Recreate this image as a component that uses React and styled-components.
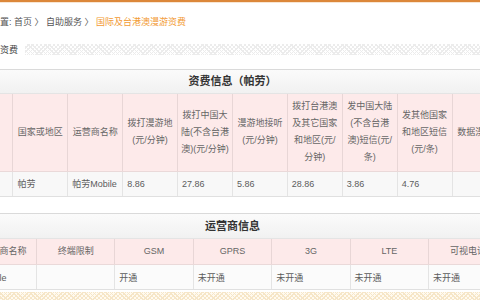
import React from 'react';
import styled, { createGlobalStyle } from 'styled-components';

const GlobalStyle = createGlobalStyle`
  html, body {
    margin: 0;
    padding: 0;
    background: #fff;
    overflow: hidden;
  }
  body {
    font-family: "Liberation Sans", "Noto Sans CJK SC", sans-serif;
  }
`;

const Page = styled.div`
  width: 549px;
  height: 300px;
  margin-left: -42px;
`;

const TopLine = styled.div`
  height: 2px;
  background: #dc873a;
  border-bottom: 1px solid #f8e6d3;
`;

const Crumbs = styled.div`
  padding: 10px 0 0 15px;
  font-size: 9px;
  line-height: 18px;
  color: #555;
  white-space: nowrap;
`;

const Current = styled.span`
  color: #f29b36;
`;

const SectionHead = styled.div`
  display: flex;
  align-items: center;
  gap: 7px;
  margin-top: 9px;
  padding-left: 6px;
  height: 18px;
  font-size: 9px;
  color: #444;
  white-space: nowrap;
`;

const Hatch = styled.div`
  flex: 1;
  height: ${p => p.$h || 11}px;
  background-color: ${p => p.$bg || '#fff'};
  background-image:
    repeating-linear-gradient(45deg, ${p => p.$ink || '#ececec'} 0 1px, transparent 1px 3px),
    repeating-linear-gradient(-45deg, ${p => p.$ink || '#ececec'} 0 1px, transparent 1px 3px);
`;

const Block = styled.section`
  margin-top: ${p => p.$gap}px;
`;

const TitleBar = styled.div`
  box-sizing: border-box;
  height: ${p => p.$h}px;
  line-height: ${p => p.$h - 2}px;
  text-align: center;
  font-size: 11px;
  font-weight: bold;
  color: #333;
  border-top: 1px solid #dadada;
  border-bottom: 1px solid #e4e4e4;
  background: linear-gradient(#fbfbfb, #f1f1f1);
`;

const Grid = styled.table`
  width: 549px;
  table-layout: fixed;
  border-collapse: collapse;
  font-size: 9px;
  color: #666;
`;

const Row = styled.tr`
  height: ${p => p.$h}px;
`;

const HeadCell = styled.th`
  box-sizing: border-box;
  padding: 0 2px 0 ${p => p.$indent || 2}px;
  background: #fdeaea;
  font-weight: normal;
  text-align: center;
  line-height: 17px;
  color: #666;
  border-left: 1px solid #e8d6d6;
  border-bottom: 1px solid #ead9d9;
  &:first-child { border-left: none; }
`;

const Line = styled.div`
  white-space: nowrap;
`;

const Cell = styled.td`
  box-sizing: border-box;
  padding: 0 4px;
  background: ${p => p.$bg};
  color: #5c5c5c;
  text-align: left;
  white-space: nowrap;
  overflow: hidden;
  border-left: 1px solid #e4e4e4;
  border-bottom: 1px solid #e0e0e0;
  &:first-child { border-left: none; }
`;

const Footer = styled.div`
  display: flex;
  margin-top: 2px;
`;

const feeHeads = [
  [],
  ['国家或地区'],
  ['运营商名称'],
  ['拨打漫游地', '(元/分钟)'],
  ['拨打中国大', '陆(不含台港', '澳)(元/分钟)'],
  ['漫游地接听', '(元/分钟)'],
  ['拨打台港澳', '及其它国家', '和地区(元/', '分钟)'],
  ['发中国大陆', '(不含台港', '澳)短信(元/', '条)'],
  ['发其他国家', '和地区短信', '(元/条)'],
  ['数据漫游费'],
];

const feeRow = ['', '帕劳', '帕劳Mobile', '8.86', '27.86', '5.86', '28.86', '3.86', '4.76', ''];

const carrierHeads = ['运营商名称', '终端限制', 'GSM', 'GPRS', '3G', 'LTE', '可视电话'];
const carrierRow = ['帕劳Mobile', '', '开通', '未开通', '未开通', '未开通', '未开通'];

const App = () => (
  <Page>
    <GlobalStyle />
    <TopLine />
    <Crumbs>
      当前位置: 首页 〉 自助服务 〉 <Current>国际及台港澳漫游资费</Current>
    </Crumbs>
    <SectionHead>
      国际漫游资费
      <Hatch />
    </SectionHead>

    <Block $gap={11}>
      <TitleBar $h={25}>资费信息（帕劳）</TitleBar>
      <Grid>
        <thead>
          <Row $h={77}>
            {feeHeads.map((lines, i) => (
              <HeadCell key={i}>
                {lines.map(l => <Line key={l}>{l}</Line>)}
              </HeadCell>
            ))}
          </Row>
        </thead>
        <tbody>
          <Row $h={25}>
            {feeRow.map((v, i) => <Cell key={i} $bg="#f8f8f8">{v}</Cell>)}
          </Row>
        </tbody>
      </Grid>
    </Block>

    <Block $gap={16}>
      <TitleBar $h={26}>运营商信息</TitleBar>
      <Grid>
        <thead>
          <Row $h={26}>
            {carrierHeads.map((h, i) => (
              <HeadCell key={h} $indent={i === 0 ? 16 : 2}>{h}</HeadCell>
            ))}
          </Row>
        </thead>
        <tbody>
          <Row $h={25}>
            {carrierRow.map((v, i) => <Cell key={i} $bg="#fbfbfb">{v}</Cell>)}
          </Row>
        </tbody>
      </Grid>
    </Block>

    <Footer>
      <Hatch $h={10} $bg="#fffaf0" $ink="#f6e6c8" />
    </Footer>
  </Page>
);

export default App;
